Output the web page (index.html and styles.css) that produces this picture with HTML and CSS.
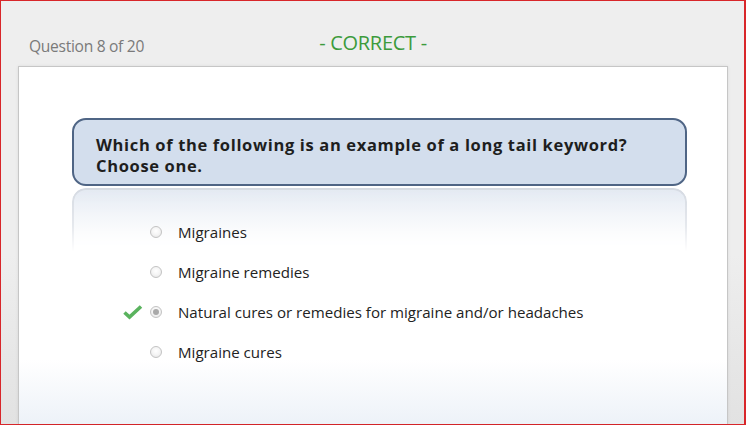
FILE: index.html
```html
<!DOCTYPE html>
<html>
<head>
<meta charset="utf-8">
<link rel="stylesheet" href="styles.css">
</head>
<body>
<div class="frame">
  <header class="header">
    <div class="counter">Question 8 of 20</div>
    <div class="status">- CORRECT -</div>
    <div></div>
  </header>
  <main class="panel">
    <div class="question">Which of the following is an example of a long tail keyword?<br>Choose one.</div>
    <div class="answers">
      <div class="reflection"></div>
      <div class="option">
        <span class="mark"></span><span class="radio"></span><span class="label">Migraines</span>
      </div>
      <div class="option">
        <span class="mark"></span><span class="radio"></span><span class="label">Migraine remedies</span>
      </div>
      <div class="option">
        <span class="mark"><svg width="20" height="16" viewBox="0 0 20 16"><polyline points="1.5,8.5 6.5,13 18,2.5" fill="none" stroke="#5ab35e" stroke-width="3.6" stroke-linejoin="miter" stroke-linecap="butt"/></svg></span><span class="radio selected"></span><span class="label">Natural cures or remedies for migraine and/or headaches</span>
      </div>
      <div class="option">
        <span class="mark"></span><span class="radio"></span><span class="label">Migraine cures</span>
      </div>
    </div>
  </main>
</div>
</body>
</html>
```

FILE: styles.css
```css
html, body {
  margin: 0;
  padding: 0;
}
body {
  width: 746px;
  height: 425px;
  overflow: hidden;
  font-family: "Open Sans", "Noto Sans", sans-serif;
}
.frame {
  box-sizing: border-box;
  width: 746px;
  height: 425px;
  border: 1px solid #d8262a;
  border-right-width: 2px;
  background: linear-gradient(to bottom, #eeeeee 0, #eeeeee 60%, #e2e2e2 100%);
  display: flex;
  flex-direction: column;
  padding: 0 16px 0 17px;
}
.header {
  height: 65px;
  flex: none;
  display: grid;
  grid-template-columns: 1fr auto 1fr;
  align-items: end;
  padding-bottom: 11px;
  box-sizing: border-box;
}
.counter {
  padding-left: 11px;
  font-size: 15.6px;
  color: #7a7a7a;
  letter-spacing: -0.3px;
  line-height: 18px;
}
.status {
  font-size: 20px;
  color: #3c9b3c;
  line-height: 22px;
  letter-spacing: -0.3px;
  padding-bottom: 1px;
}
.panel {
  flex: 1;
  border: 1px solid #c6c6c6;
  border-bottom: none;
  background: linear-gradient(to bottom, #ffffff 0, #ffffff 82%, #edf2f8 100%);
  padding: 51px 40px 0 53px;
  box-shadow: 0 0 3px rgba(0,0,0,0.08);
}
.question {
  box-sizing: border-box;
  height: 68px;
  border: 2px solid #4f6585;
  border-radius: 14px;
  background: #d3deed;
  padding: 14px 10px 0 22px;
  font-weight: bold;
  font-size: 16.5px;
  letter-spacing: 0.65px;
  line-height: 21px;
  color: #1e1e1e;
  white-space: nowrap;
}
.answers {
  position: relative;
  padding-top: 26px;
}
.reflection {
  position: absolute;
  left: 0;
  right: 0;
  top: 2px;
  height: 64px;
  box-sizing: border-box;
  border: 2px solid #d5dae2;
  border-bottom: none;
  border-radius: 14px 14px 0 0;
  background: linear-gradient(to bottom, #e3e9f2 0, #ffffff 100%);
  -webkit-mask-image: linear-gradient(to bottom, #000 0, rgba(0,0,0,0.6) 60%, transparent 100%);
  mask-image: linear-gradient(to bottom, #000 0, rgba(0,0,0,0.6) 60%, transparent 100%);
}
.option {
  position: relative;
  display: flex;
  align-items: center;
  height: 40px;
  padding-left: 51px;
}
.mark {
  width: 20px;
  height: 16px;
  margin-right: 7px;
  display: flex;
}
.radio {
  box-sizing: border-box;
  width: 12px;
  height: 12px;
  border-radius: 50%;
  border: 1px solid #c3c3c3;
  background: radial-gradient(circle at 50% 40%, #ffffff 0, #f4f4f4 50%, #e2e2e2 100%);
  margin-right: 16px;
  position: relative;
}
.radio.selected::after {
  content: "";
  position: absolute;
  left: 2px;
  top: 2px;
  width: 6px;
  height: 6px;
  border-radius: 50%;
  background: #a9a9a9;
}
.label {
  font-size: 15.1px;
  color: #222222;
  line-height: 20px;
}
```
